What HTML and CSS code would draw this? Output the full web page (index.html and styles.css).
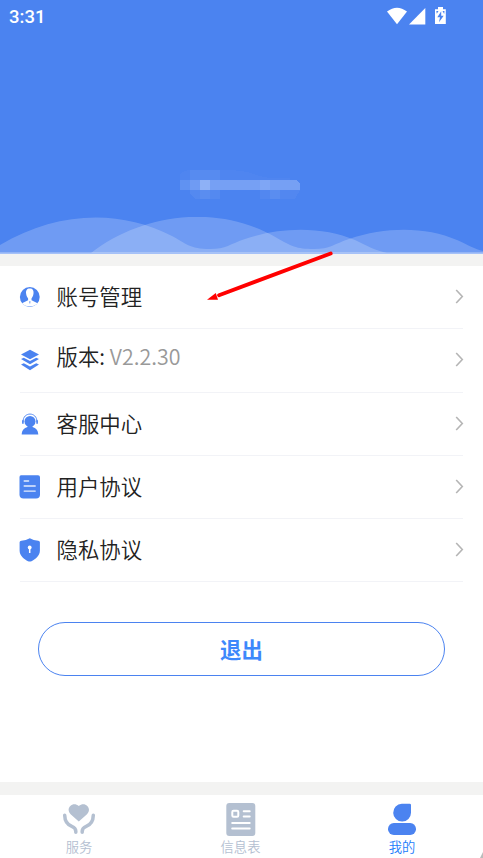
FILE: index.html
```html
<!DOCTYPE html>
<html lang="zh-CN">
<head>
<meta charset="utf-8">
<title>我的</title>
<link rel="stylesheet" href="styles.css">
</head>
<body>
<div class="app">
  <header class="hero">
    <div class="status">
      <span class="clock">3:31</span>
      <svg class="status-icons" width="60" height="20" viewBox="0 0 60 20" fill="#fff">
        <path d="M0 4.6Q10 -3.2 20 4.6L10 17.2Z"/>
        <path d="M38.3 1V17.5H22Z"/>
        <path d="M48 2.3h3V0h5v2.3h2.8V17H48Z"/>
        <path d="M54.2 4.3L50.3 10.3H53L52 15.3L56.7 8.7H54.2Z" fill="#4b83f0"/>
        <path d="M49.3 4h2.2L49.8 6.8ZM57.5 4h-2l1.7 3Z" fill="#4b83f0"/>
      </svg>
    </div>
    <svg class="masked-name" width="122" height="32" viewBox="0 0 122 32" shape-rendering="crispEdges">
      <path d="M1 4Q4 1 11 0H50Q70 1 80 6L91 8H111V10H1Z" fill="#fff" opacity=".025"/>
      <path d="M11 0H41V29H16L11 23Z" fill="#fff" opacity=".05"/>
      <path d="M21 20H31V29H21Z" fill="#fff" opacity=".04"/>
      <path d="M81 20H121L116 29H81Z" fill="#fff" opacity=".04"/>
      <path d="M91 20H101V29H91Z" fill="#fff" opacity=".05"/>
      <path d="M1 10H11V20H1Z" fill="#6092f2"/>
      <path d="M11 10H21V20H11Z" fill="#6f9bf3"/>
      <path d="M21 10H31V20H21Z" fill="#8eb1f6"/>
      <path d="M31 10H118L121 14V20H31Z" fill="#76a0f4"/>
      <path d="M81 10H91V20H81Z" fill="#7fa6f5"/>
    </svg>
    <svg class="waves" width="483" height="37" viewBox="0 0 483 37" fill="#fff" fill-opacity=".2">
      <path d="M0 28C57 -6 120 -8 172 19C185 26 190 32 210 32C226 32 230 27 245 22C283 9 324 10 355 23C368 29 374 33 387 36H0Z"/>
      <path d="M91 36C140 -2 215 -15 277 21C291 29 296 32 314 32C330 32 334 27 349 22C387 9 427 10 457 23C468 28 475 32 483 34V36Z"/>
      <path d="M0 35.5H483V37H0Z" fill-opacity=".5"/>
    </svg>
  </header>
  <main class="list">
    <div class="row">
      <svg class="icon" viewBox="0 0 22 24">
        <circle cx="10.8" cy="12" r="9.9" fill="#4b83f0"/>
        <path d="M10.8 3.6C7.8 3.6 6.7 5.7 7.1 8.6C7.4 11.2 8.3 12.5 9.1 13.4V15.2L4 17.8Q3 18.4 3.2 18.8Q6 21.4 10.8 21.4Q15.6 21.4 18.4 18.8Q18.5 18.4 17.6 17.8L12.5 15.2V13.4C13.3 12.5 14.2 11.2 14.5 8.6C14.9 5.7 13.8 3.6 10.8 3.6Z" fill="#fff"/>
        <path d="M10 16.3H11.6L11.2 18.6H10.4Z" fill="#4b83f0" opacity=".7"/>
      </svg>
      <span class="label">账号管理</span>
      <svg class="chevron" viewBox="0 0 9 15"><path d="M1.2 1L7.3 7.5L1.2 14"/></svg>
    </div>
    <div class="row version">
      <svg class="icon" viewBox="0 0 22 24" fill="#4b83f0">
        <path d="M11 1.8L20 6.5L11 11.3L2 6.5Z"/>
        <path d="M2 11.1L4.8 9.7L11 13L17.2 9.7L20 11.1L11 16.3Z"/>
        <path d="M2 16.6L4.8 15.2L11 18.5L17.2 15.2L20 16.6L11 22.2Z"/>
      </svg>
      <span class="label">版本: <span class="number">V2.2.30</span></span>
      <svg class="chevron" viewBox="0 0 9 15"><path d="M1.2 1L7.3 7.5L1.2 14"/></svg>
    </div>
    <div class="row">
      <svg class="icon" viewBox="0 0 22 24" fill="#4b83f0">
        <circle cx="11" cy="9.4" r="5.5"/>
        <path d="M8.5 13H13.5V15C17 16 19 18 19.3 22.5H2.7C3 18 5 16 8.5 15Z"/>
        <path d="M4.1 9.8C3.8 -.5 18.2 -.5 17.9 9.8" fill="none" stroke="#4b83f0" stroke-width=".9"/>
        <path d="M3.9 8.3V11.7M18.1 8.3V11.7" stroke="#4b83f0" stroke-width="1.6"/>
      </svg>
      <span class="label">客服中心</span>
      <svg class="chevron" viewBox="0 0 9 15"><path d="M1.2 1L7.3 7.5L1.2 14"/></svg>
    </div>
    <div class="row">
      <svg class="icon" viewBox="0 0 22 24">
        <path d="M2 .2H19Q21 .2 21 2.2V19.5Q21 23.6 17 23.6H4.5Q.5 23.6 .5 19.5V2Q.5 .2 2 .2Z" fill="#4b83f0"/>
        <path d="M5.2 6H9.6M5.2 11H16.2M5.2 16.1H16.2" stroke="#fff" stroke-opacity=".85" stroke-width="1.4" stroke-linecap="round"/>
      </svg>
      <span class="label">用户协议</span>
      <svg class="chevron" viewBox="0 0 9 15"><path d="M1.2 1L7.3 7.5L1.2 14"/></svg>
    </div>
    <div class="row">
      <svg class="icon" viewBox="0 0 22 24">
        <path d="M10.8 .3Q14.5 2.7 19.2 2.7Q20.9 2.8 20.9 4.3V12.5C20.9 18 16 21.5 12.5 23.2Q10.7 24 9 23.2C5.5 21.5 .6 18 .6 12.5V4.3Q.6 2.8 2.4 2.7Q7 2.7 10.8 .3Z" fill="#4b83f0"/>
        <circle cx="10.7" cy="9.5" r="1.9" fill="#fff"/>
        <path d="M10.7 10V15" stroke="#fff" stroke-width="1.5"/>
      </svg>
      <span class="label">隐私协议</span>
      <svg class="chevron" viewBox="0 0 9 15"><path d="M1.2 1L7.3 7.5L1.2 14"/></svg>
    </div>
    <button class="logout">退出</button>
  </main>
  <nav class="tabs">
    <div class="tab">
      <svg class="tab-icon" width="34" height="34" viewBox="0 0 34 34" fill="none">
        <path d="M16.8 18.6L8.6 11.2C2.8 5 11 -2.4 16.8 3C22.6 -2.4 30.8 5 25 11.2Z" fill="#b4c0d1"/>
        <path d="M2.7 12.2C2.8 17.7 5.3 21.6 9.8 23.4Q13.8 25 13.8 28.2V29.3M31.3 12.2C31.2 17.7 28.7 21.6 24.2 23.4Q20.2 25 20.2 28.2V29.3" stroke="#b4c0d1" stroke-width="3.5" stroke-linecap="round"/>
      </svg>
      <span>服务</span>
    </div>
    <div class="tab">
      <svg class="tab-icon" width="34" height="34" viewBox="0 0 34 34" fill="none">
        <rect x="2.3" y="0" width="29" height="33" rx="3" fill="#b4c0d1"/>
        <rect x="8.3" y="7.7" width="6" height="6" rx="1.2" stroke="#fff" stroke-width="2"/>
        <path d="M19.7 8.2H25.7M19.7 13.4H25.7M8.2 20H25.7M8.2 25.4H25.7" stroke="#fff" stroke-width="2" stroke-linecap="round"/>
      </svg>
      <span>信息表</span>
    </div>
    <div class="tab active">
      <svg class="tab-icon" width="34" height="34" viewBox="0 0 34 34" fill="#4b83f0">
        <path d="M16.8 .8H24.7Q26 .8 26 2.1V9.7A8.9 8.9 0 1 1 16.8 .8Z"/>
        <rect x="3" y="20" width="28" height="12" rx="5.8"/>
      </svg>
      <span>我的</span>
    </div>
  </nav>
  <svg class="pointer" width="128" height="52" viewBox="0 0 128 52">
    <path d="M124.7 3.5L13 45.2" stroke="#f00" stroke-width="3.8" stroke-linecap="round"/>
    <path d="M1 49.7L9.8 43L12 49.8Z" fill="#f00"/>
  </svg>
  <svg class="corner" width="3" height="6" viewBox="0 0 3 6"><path d="M3 0V6H0Z" fill="#bbb"/></svg>
</div>
</body>
</html>
```
FILE: styles.css
```css
* { box-sizing: border-box; }
body {
  margin: 0;
  background: #fff;
  font-family: "Noto Sans CJK SC", sans-serif;
}
.app {
  position: relative;
  display: flex;
  flex-direction: column;
  width: 483px;
  height: 858px;
  overflow: hidden;
}
svg { display: block; flex: none; }
.hero {
  display: flex;
  flex-direction: column;
  align-items: center;
  height: 254px;
  background: #4b83f0;
}
.status {
  display: flex;
  justify-content: space-between;
  align-items: flex-start;
  width: 100%;
  padding: 7px 36px 0 9px;
}
.clock {
  color: #fff;
  font: 500 18.5px/20px Roboto, sans-serif;
}
.masked-name { margin: 143px 0 0 -3px; }
.waves { margin-top: auto; }
.list {
  flex: 1;
  border-top: 12px solid #f3f3f2;
  padding: 0 20px;
}
.row {
  display: flex;
  align-items: center;
  height: 63.3px;
  border-bottom: 1.5px solid #f2f3f7;
}
.icon { width: 22px; height: 24px; margin-left: -1px; }
.label {
  flex: 1;
  margin: -2px 0 0 15.5px;
  color: #222;
  font-size: 21.4px;
  font-weight: 350;
  line-height: 32px;
}
.version .label { margin-top: -8px; }
.number { color: #999; }
.chevron {
  width: 9px;
  height: 15px;
  margin: -1px -1px 0 0;
  fill: none;
  stroke: #b5b5b5;
  stroke-width: 1.6;
}
.logout {
  display: block;
  width: 407px;
  height: 54px;
  margin: 39.5px auto 0;
  padding: 0;
  border: 1.5px solid #4b83f0;
  border-radius: 27px;
  background: #fff;
  color: #3d88fb;
  font: 700 21.4px/50px "Noto Sans CJK SC", sans-serif;
}
.tabs {
  display: flex;
  justify-content: space-between;
  height: 76px;
  padding: 8px 42px 0 40px;
  border-top: 13px solid #f3f3f2;
}
.tab {
  display: flex;
  flex-direction: column;
  align-items: center;
  width: 78px;
  color: #b4c0d1;
  font-size: 13.3px;
  font-weight: 350;
  line-height: 20px;
}
.tab.active { color: #1b7cfb; }
.pointer { position: absolute; left: 206px; top: 250px; }
.corner { position: absolute; right: 0; bottom: 0; }
```
